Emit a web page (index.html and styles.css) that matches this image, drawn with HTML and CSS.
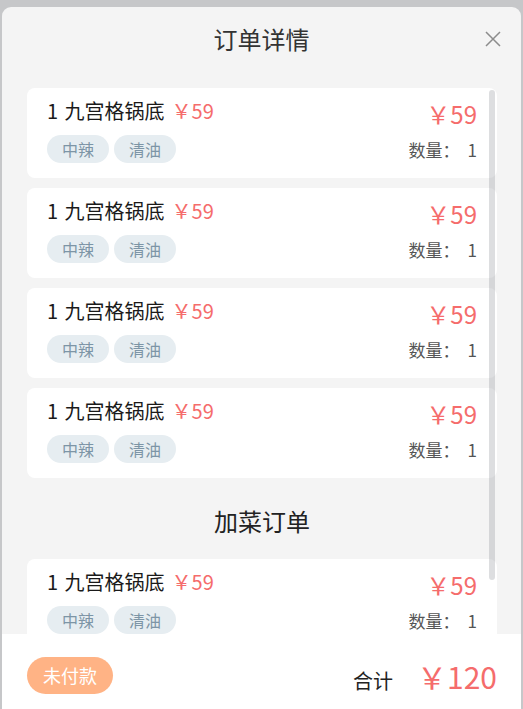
FILE: index.html
```html
<!DOCTYPE html>
<html lang="zh-CN">

<head>
    <meta charset="UTF-8">
    <meta name="viewport" content="width=device-width, initial-scale=1.0">
    <title>订单详情</title>
    <link rel="stylesheet" href="styles.css">
</head>

<body>
    <div class="modal">
        <div class="modal-head">
            <span class="modal-title">订单详情</span>
            <svg class="close" width="16" height="16" viewBox="0 0 16 16">
                <path d="M1 1L15 15M15 1L1 15" stroke="#8c8c8c" stroke-width="1.5" fill="none"/>
            </svg>
        </div>

        <div class="order-list">
            <div class="card">
                <div class="card-left">
                    <div class="dish">1 九宫格锅底<span class="unit-price">￥59</span></div>
                    <div class="tags"><span class="tag">中辣</span><span class="tag">清油</span></div>
                </div>
                <div class="card-right">
                    <div class="price">￥59</div>
                    <div class="qty">数量：<span class="qty-num">1</span></div>
                </div>
            </div>
            <div class="card">
                <div class="card-left">
                    <div class="dish">1 九宫格锅底<span class="unit-price">￥59</span></div>
                    <div class="tags"><span class="tag">中辣</span><span class="tag">清油</span></div>
                </div>
                <div class="card-right">
                    <div class="price">￥59</div>
                    <div class="qty">数量：<span class="qty-num">1</span></div>
                </div>
            </div>
            <div class="card">
                <div class="card-left">
                    <div class="dish">1 九宫格锅底<span class="unit-price">￥59</span></div>
                    <div class="tags"><span class="tag">中辣</span><span class="tag">清油</span></div>
                </div>
                <div class="card-right">
                    <div class="price">￥59</div>
                    <div class="qty">数量：<span class="qty-num">1</span></div>
                </div>
            </div>
            <div class="card">
                <div class="card-left">
                    <div class="dish">1 九宫格锅底<span class="unit-price">￥59</span></div>
                    <div class="tags"><span class="tag">中辣</span><span class="tag">清油</span></div>
                </div>
                <div class="card-right">
                    <div class="price">￥59</div>
                    <div class="qty">数量：<span class="qty-num">1</span></div>
                </div>
            </div>

            <div class="section-title">加菜订单</div>

            <div class="card">
                <div class="card-left">
                    <div class="dish">1 九宫格锅底<span class="unit-price">￥59</span></div>
                    <div class="tags"><span class="tag">中辣</span><span class="tag">清油</span></div>
                </div>
                <div class="card-right">
                    <div class="price">￥59</div>
                    <div class="qty">数量：<span class="qty-num">1</span></div>
                </div>
            </div>

            <div class="scroll-thumb"></div>
        </div>

        <div class="modal-foot">
            <span class="status">未付款</span>
            <div class="total">
                <span class="total-label">合计</span>
                <span class="total-price">￥120</span>
            </div>
        </div>
    </div>
</body>

</html>
```

FILE: styles.css
```css
body {
    margin: 0;
    background-color: #c6c7c9;
    font-family: "Noto Sans CJK SC", "Noto Sans", sans-serif;
    overflow: hidden;
}

.modal {
    margin: 7px 2px 0 2px;
    width: 519px;
    height: 702px;
    background-color: #f4f4f4;
    border-radius: 9px 9px 0 0;
    display: flex;
    flex-direction: column;
    overflow: hidden;
}

.modal-head {
    position: relative;
    height: 64px;
    display: flex;
    align-items: center;
    justify-content: center;
    flex-shrink: 0;
}

.modal-title {
    font-size: 24px;
    color: #333;
    line-height: 1;
}

.close {
    position: absolute;
    right: 20px;
    top: 24px;
}

.order-list {
    position: relative;
    height: 563px;
    flex-shrink: 0;
    overflow: hidden;
    padding: 17px 24px 0 25px;
    box-sizing: border-box;
}

.card {
    background-color: #fff;
    border-radius: 8px;
    height: 90px;
    box-sizing: border-box;
    padding: 10px 20px 0 20px;
    margin-bottom: 10px;
    display: flex;
    justify-content: space-between;
}

.dish {
    font-size: 20px;
    line-height: 26px;
    color: #1a1a1a;
    word-spacing: 2px;
}

.unit-price {
    color: #f56c6c;
    margin-left: 7px;
}

.tags {
    display: flex;
    gap: 5px;
    margin-top: 11px;
}

.tag {
    background-color: #e6edf1;
    color: #7d95a6;
    font-size: 16px;
    line-height: 28px;
    height: 28px;
    padding: 0 15px;
    border-radius: 14px;
}

.card-right {
    text-align: right;
}

.price {
    font-size: 24px;
    line-height: 30px;
    margin-top: 1px;
    color: #f56c6c;
}

.qty {
    font-size: 17px;
    line-height: 22px;
    margin-top: 10px;
    color: #555;
}

.qty-num {
    margin-left: 8px;
}

.section-title {
    font-size: 24px;
    color: #222;
    text-align: center;
    padding-top: 5px;
    line-height: 56px;
    margin-bottom: 10px;
}

.scroll-thumb {
    position: absolute;
    top: 19px;
    right: 26px;
    width: 6px;
    height: 490px;
    border-radius: 3px;
    background-color: rgba(144, 147, 153, 0.3);
}

.modal-foot {
    flex: 1;
    background-color: #fff;
    display: flex;
    justify-content: space-between;
    align-items: flex-start;
    padding: 0 24px 0 25px;
}

.status {
    margin-top: 23px;
    background-color: #ffb385;
    color: #fff;
    font-size: 18px;
    line-height: 37px;
    padding: 0 16px;
    border-radius: 19px;
}

.total {
    display: flex;
    align-items: baseline;
    gap: 24px;
    margin-top: 22px;
}

.total-label {
    font-size: 20px;
    color: #222;
}

.total-price {
    font-size: 30px;
    line-height: 40px;
    color: #f56c6c;
}
```
